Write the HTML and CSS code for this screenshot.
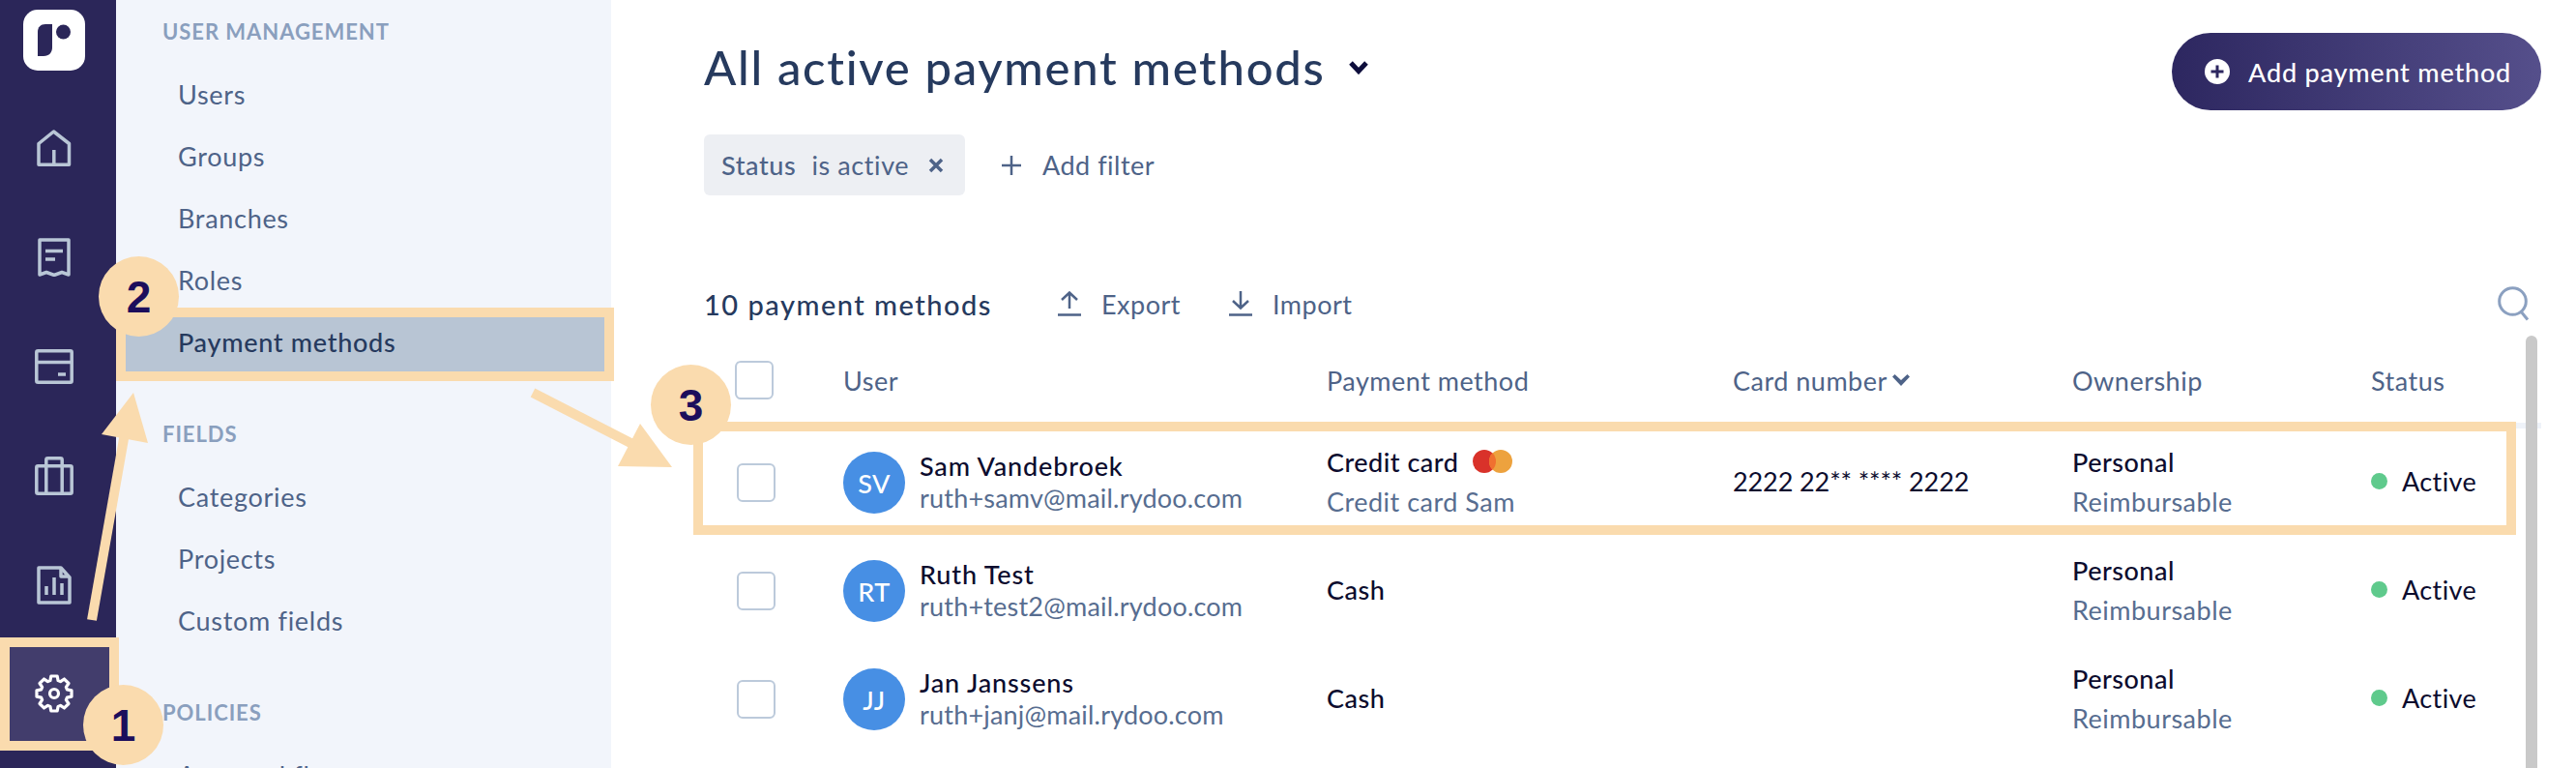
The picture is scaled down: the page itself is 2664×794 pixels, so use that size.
FILE: index.html
```html
<!DOCTYPE html>
<html lang="en">
<head>
  <meta charset="UTF-8" />
  <title>Payment methods</title>
  <link rel="stylesheet" href="styles.css">
</head>
<body>

  <div class="page">
    <!-- Icon rail -->
    <nav class="rail">
      <div class="logo">
        <svg width="40" height="36" viewBox="0 0 40 36">
          <path d="M8 0H15V24C15 29 12 33 6 33H0V8C0 3 3 0 8 0Z" fill="#2b2659" />
          <circle cx="26.500" cy="8" r="7.500" fill="#2b2659" />
        </svg>
      </div>

      <a class="rail-item">
        <svg width="36" height="38" viewBox="0 0 36 38" class="rail-icon">
          <path d="M2 14.500L17.500 2L33.500 14.500V36.200H2Z" />
          <path d="M17.800 36V21" />
        </svg>
      </a>
      <a class="rail-item">
        <svg width="34" height="40" viewBox="0 0 34 40" class="rail-icon">
          <path d="M2 38V2H32V38L25 35.500L17 38.500L9 35.500Z" />
          <path d="M8 13.500H26M8 22H18" />
        </svg>
      </a>
      <a class="rail-item">
        <svg width="40" height="36" viewBox="0 0 40 36" class="rail-icon">
          <rect x="1.800" y="1.800" width="36.400" height="32.400" rx="1.500" />
          <path d="M2 13.500H38M24 26H32" />
        </svg>
      </a>
      <a class="rail-item">
        <svg width="40" height="40" viewBox="0 0 40 40" class="rail-icon">
          <rect x="1.800" y="9.800" width="36.400" height="28.400" rx="1.500" />
          <path d="M11.800 38V3.500Q11.800 1.800 13.500 1.800H26.500Q28.200 1.800 28.200 3.500V38" />
        </svg>
      </a>
      <a class="rail-item">
        <svg width="36" height="40" viewBox="0 0 36 40" class="rail-icon">
          <path d="M2 2H25L34 12V38H2Z" />
          <path d="M25 3V11H33" />
          <path d="M10 30V21M18 30V12M26 30V18" />
        </svg>
      </a>
      <a class="rail-item active">
        <svg width="40" height="40" viewBox="0 0 40 40" class="rail-icon">
          <path d="M16.820 1.980L23.180 1.980L24.090 6.610L26.570 7.640L30.500 5.010L34.990 9.500L32.360 13.430L33.390 15.910L38.020 16.820L38.020 23.180L33.390 24.090L32.360 26.570L34.990 30.500L30.500 34.990L26.570 32.360L24.090 33.390L23.180 38.020L16.820 38.020L15.910 33.390L13.430 32.360L9.500 34.990L5.010 30.500L7.640 26.570L6.610 24.090L1.980 23.180L1.980 16.820L6.610 15.910L7.640 13.430L5.010 9.500L9.500 5.010L13.430 7.640L15.910 6.610Z" />
          <circle cx="20" cy="20" r="4.500" />
        </svg>
      </a>
    </nav>

    <!-- Settings menu -->
    <aside class="menu">
      <div class="menu-label">USER MANAGEMENT</div>
      <a class="menu-item">Users</a>
      <a class="menu-item">Groups</a>
      <a class="menu-item">Branches</a>
      <a class="menu-item">Roles</a>
      <a class="menu-item current">Payment methods</a>

      <div class="menu-label spaced">FIELDS</div>
      <a class="menu-item">Categories</a>
      <a class="menu-item">Projects</a>
      <a class="menu-item">Custom fields</a>

      <div class="menu-label spaced">POLICIES</div>
      <a class="menu-item">Approval flows</a>
    </aside>

    <!-- Main -->
    <main class="main">
      <div class="head">
        <h1>All active payment methods</h1>
        <svg class="title-chevron" width="22" height="15" viewBox="0 0 22 15">
          <path d="M3 3L11 11.500L19 3" />
        </svg>
        <button class="add-btn">
          <svg width="26" height="26" viewBox="0 0 26 26">
            <circle cx="13" cy="13" r="13" fill="#fff" />
            <path d="M13 6.500V19.500M6.500 13H19.500" stroke="#2d2760" stroke-width="3" />
          </svg>
          Add payment method
        </button>
      </div>

      <div class="filters">
        <div class="chip">
          <span class="chip-key">Status</span>
          <span>is active</span>
          <svg width="18" height="18" viewBox="0 0 18 18" class="chip-x">
            <path d="M3 3L15 15M15 3L3 15" />
          </svg>
        </div>
        <a class="add-filter">
          <svg width="20" height="20" viewBox="0 0 20 20" class="line-icon">
            <path d="M10 0V20M0 10H20" />
          </svg>
          Add filter
        </a>
      </div>

      <div class="toolbar">
        <span class="count">10 payment methods</span>
        <a class="tool export">
          <svg width="24" height="26" viewBox="0 0 24 26" class="line-icon">
            <path d="M12 18V1.500M4 9L12 1.500L20 9M0 24.500H24" />
          </svg>
          Export
        </a>
        <a class="tool">
          <svg width="24" height="26" viewBox="0 0 24 26" class="line-icon">
            <path d="M12 0V17.500M4 10L12 17.500L20 10M0 24.500H24" />
          </svg>
          Import
        </a>
        <svg class="search" width="34" height="36" viewBox="0 0 34 36">
          <circle cx="15.500" cy="15.500" r="13.800" />
          <path d="M24 26L31 34.500" />
        </svg>
      </div>

      <div class="table">
        <div class="row header">
          <span class="check head-check"></span>
          <span>User</span>
          <span>Payment method</span>
          <span class="sortable">Card number
            <svg width="18" height="12" viewBox="0 0 18 12"><path d="M0 2.500L2.500 0L9 6L15.500 0L18 2.500L9 12Z" fill="#4e6388" /></svg>
          </span>
          <span>Ownership</span>
          <span>Status</span>
        </div>

        <div class="row">
          <span class="check"></span>
          <div class="user">
            <span class="avatar">SV</span>
            <div class="user-text">
              <div class="name">Sam Vandebroek</div>
              <div class="email">ruth+samv@mail.rydoo.com</div>
            </div>
          </div>
          <div class="stack">
            <div class="strong card-line">Credit card
              <svg width="41" height="24" viewBox="0 0 41 24">
                <circle cx="12" cy="12" r="12" fill="#d9322a" />
                <circle cx="29" cy="12" r="12" fill="#eda23e" />
                <path d="M20.500 3.500A12 12 0 0 1 20.500 20.500A12 12 0 0 1 20.500 3.500Z" fill="#f07030" />
              </svg>
            </div>
            <div class="sub">Credit card Sam</div>
          </div>
          <div class="plain">2222 22** **** 2222</div>
          <div class="stack">
            <div class="strong">Personal</div>
            <div class="sub">Reimbursable</div>
          </div>
          <div class="status"><i class="dot"></i>Active</div>
        </div>

        <div class="row">
          <span class="check"></span>
          <div class="user">
            <span class="avatar">RT</span>
            <div class="user-text">
              <div class="name">Ruth Test</div>
              <div class="email">ruth+test2@mail.rydoo.com</div>
            </div>
          </div>
          <div class="strong">Cash</div>
          <div></div>
          <div class="stack">
            <div class="strong">Personal</div>
            <div class="sub">Reimbursable</div>
          </div>
          <div class="status"><i class="dot"></i>Active</div>
        </div>

        <div class="row">
          <span class="check"></span>
          <div class="user">
            <span class="avatar">JJ</span>
            <div class="user-text">
              <div class="name">Jan Janssens</div>
              <div class="email">ruth+janj@mail.rydoo.com</div>
            </div>
          </div>
          <div class="strong">Cash</div>
          <div></div>
          <div class="stack">
            <div class="strong">Personal</div>
            <div class="sub">Reimbursable</div>
          </div>
          <div class="status"><i class="dot"></i>Active</div>
        </div>
      </div>

      <div class="scrollbar"></div>
    </main>
  </div>

  <!-- Tutorial annotations drawn over the screenshot -->
  <div class="mark mark-gear"></div>
  <div class="mark mark-menu"></div>
  <div class="mark mark-row"></div>

  <svg class="arrows" width="2664" height="794" viewBox="0 0 2664 794">
    <path d="M95 641L129 448" />
    <polygon points="138,406 105,449 153,458" />
    <path d="M551 406L660 462" />
    <polygon points="695,483 662,438 639,482" />
  </svg>

  <div class="step step-1">1</div>
  <div class="step step-2">2</div>
  <div class="step step-3">3</div>

</body>
</html>
```

FILE: styles.css
```css
* {
  box-sizing: border-box;
}

body {
  margin: 0;
  width: 2664px;
  height: 794px;
  overflow: hidden;
  position: relative;
  background: #fff;
  font-family: "Lato", sans-serif;
  font-size: 27px;
  color: #4e6388;
}

.page {
  display: flex;
  height: 794px;
}

/* Icon rail */
.rail {
  width: 120px;
  background: #2b2659;
  display: flex;
  flex-direction: column;
  align-items: flex-start;
  flex-shrink: 0;
}

.logo {
  width: 64px;
  height: 63px;
  margin: 10px 0 0 24px;
  background: #fff;
  border-radius: 15px;
  padding: 15px 0 0 15px;
}

.logo svg {
  display: block;
}

.rail-item {
  width: 112px;
  height: 113px;
  display: flex;
  align-items: center;
  justify-content: center;
}

.rail-item:nth-child(2) {
  margin-top: 23px;
}

.rail-item.active {
  width: 120px;
  height: 112px;
  padding-right: 8px;
  background: #423d6c;
}

.rail-icon {
  fill: none;
  stroke: #b9c6d6;
  stroke-width: 3.500;
  stroke-linejoin: round;
}

.rail-item.active .rail-icon {
  stroke: #fff;
  stroke-width: 3.200;
}

/* Settings menu */
.menu {
  width: 512px;
  background: #f2f5fb;
  flex-shrink: 0;
  overflow: hidden;
}

.menu-label {
  height: 66px;
  line-height: 66px;
  padding-left: 48px;
  font-size: 22px;
  font-weight: 700;
  letter-spacing: 0.95px;
  color: #8a9fbe;
}

.menu-label.spaced {
  margin-top: 30px;
}

.menu-item {
  display: block;
  height: 64px;
  line-height: 64px;
  padding-left: 64px;
  letter-spacing: 0.7px;
  color: #4e6388;
}

.menu-item.current {
  background: #b8c5d4;
  color: #263a5e;
  font-weight: 500;
}

/* Main */
.main {
  flex: 1;
  position: relative;
  padding: 34px 36px 0 96px;
}

.head {
  display: flex;
  align-items: flex-start;
  height: 80px;
}

h1 {
  margin: 0;
  font-size: 49px;
  line-height: 70px;
  font-weight: 500;
  letter-spacing: 1.7px;
  color: #263a5e;
}

.title-chevron {
  margin: 28px 0 0 24px;
  fill: none;
  stroke: #0e0e3c;
  stroke-width: 5;
}

.add-btn {
  margin-left: auto;
  height: 80px;
  width: 382px;
  border: none;
  border-radius: 40px;
  padding: 0 0 0 34px;
  display: flex;
  align-items: center;
  gap: 19px;
  background: linear-gradient(90deg, #2d2760, #554f8b);
  color: #fff;
  font-family: inherit;
  font-size: 27px;
  font-weight: 500;
  letter-spacing: 0.8px;
}

.filters {
  display: flex;
  align-items: center;
  margin-top: 25px;
  height: 63px;
}

.chip {
  display: flex;
  align-items: center;
  width: 270px;
  height: 63px;
  padding-left: 18px;
  background: #edeff3;
  border-radius: 6px;
  letter-spacing: 0.6px;
}

.chip-key {
  font-weight: 500;
  margin-right: 16px;
}

.chip-x {
  margin-left: 19px;
  fill: none;
  stroke: #4e6388;
  stroke-width: 3.500;
}

.line-icon {
  fill: none;
  stroke: #4e6388;
  stroke-width: 2.500;
  flex-shrink: 0;
}

.add-filter {
  display: flex;
  align-items: center;
  gap: 22px;
  margin-left: 38px;
  letter-spacing: 0.5px;
}

.toolbar {
  display: flex;
  align-items: center;
  height: 48px;
  margin-top: 88px;
  padding-right: 11px;
}

.count {
  width: 366px;
  font-size: 29px;
  font-weight: 500;
  letter-spacing: 1.5px;
  color: #263a5e;
}

.tool {
  display: flex;
  align-items: center;
  gap: 21px;
  width: 177px;
  letter-spacing: 0.5px;
}

.search {
  margin-left: auto;
  fill: none;
  stroke: #8ba0c0;
  stroke-width: 3;
}

/* Table */
.row {
  display: grid;
  grid-template-columns: 110px 500px 420px 351px 309px 1fr;
  align-items: center;
  height: 112px;
  padding-left: 34px;
  letter-spacing: 0.5px;
}

.row.header {
  height: 105px;
  padding-top: 11px;
  border-bottom: 6px solid #eff3f9;
}

.check {
  display: block;
  width: 40px;
  height: 40px;
  background: #fff;
  border: 2.500px solid #bccadb;
  border-radius: 6px;
}

.head-check {
  margin-left: -2px;
}

.sortable {
  display: flex;
  align-items: center;
  gap: 5px;
}

.user {
  display: flex;
  align-items: center;
  gap: 15px;
}

.avatar {
  width: 64px;
  height: 64px;
  border-radius: 50%;
  background: #478fe4;
  color: #fff;
  font-weight: 500;
  display: flex;
  align-items: center;
  justify-content: center;
}

.user-text {
  line-height: 33px;
  padding-bottom: 3px;
}

.name,
.strong {
  color: #0c0c2e;
  font-weight: 500;
}

.name {
  letter-spacing: 0.85px;
}

.email {
  letter-spacing: 0.2px;
}

.email,
.sub {
  color: #576d90;
}

.stack,
.plain,
.status,
.row > .strong {
  padding-bottom: 3px;
}

.stack {
  line-height: 41px;
}

.card-line {
  display: flex;
  align-items: center;
  gap: 15px;
}

.plain {
  color: #0c0c2e;
  letter-spacing: -0.1px;
}

.status {
  display: flex;
  align-items: center;
  gap: 15px;
  color: #0c0c2e;
  letter-spacing: 0.4px;
}

.dot {
  width: 17px;
  height: 17px;
  border-radius: 50%;
  background: #5fca8c;
}

.scrollbar {
  position: absolute;
  left: 1980px;
  top: 347px;
  bottom: 0;
  width: 12px;
  background: #c9c9c9;
  border-radius: 6px 6px 0 0;
}

/* Annotations */
.mark {
  position: absolute;
  border: 10px solid #fadbae;
}

.mark-gear {
  left: 0;
  top: 659px;
  width: 123px;
  height: 117px;
}

.mark-menu {
  left: 120px;
  top: 318px;
  width: 515px;
  height: 76px;
}

.mark-row {
  left: 717px;
  top: 436px;
  width: 1885px;
  height: 117px;
}

.arrows {
  position: absolute;
  left: 0;
  top: 0;
  fill: #fadbae;
  stroke: none;
}

.arrows path {
  fill: none;
  stroke: #fadbae;
  stroke-width: 10;
}

.step {
  position: absolute;
  width: 83px;
  height: 83px;
  border-radius: 50%;
  background: #fadbae;
  color: #1c0e5c;
  font-family: "Liberation Sans", sans-serif;
  font-size: 46px;
  font-weight: 700;
  line-height: 85px;
  text-align: center;
}

.step-1 {
  left: 86px;
  top: 708px;
}

.step-2 {
  left: 102px;
  top: 265px;
}

.step-3 {
  left: 673px;
  top: 377px;
}
```
